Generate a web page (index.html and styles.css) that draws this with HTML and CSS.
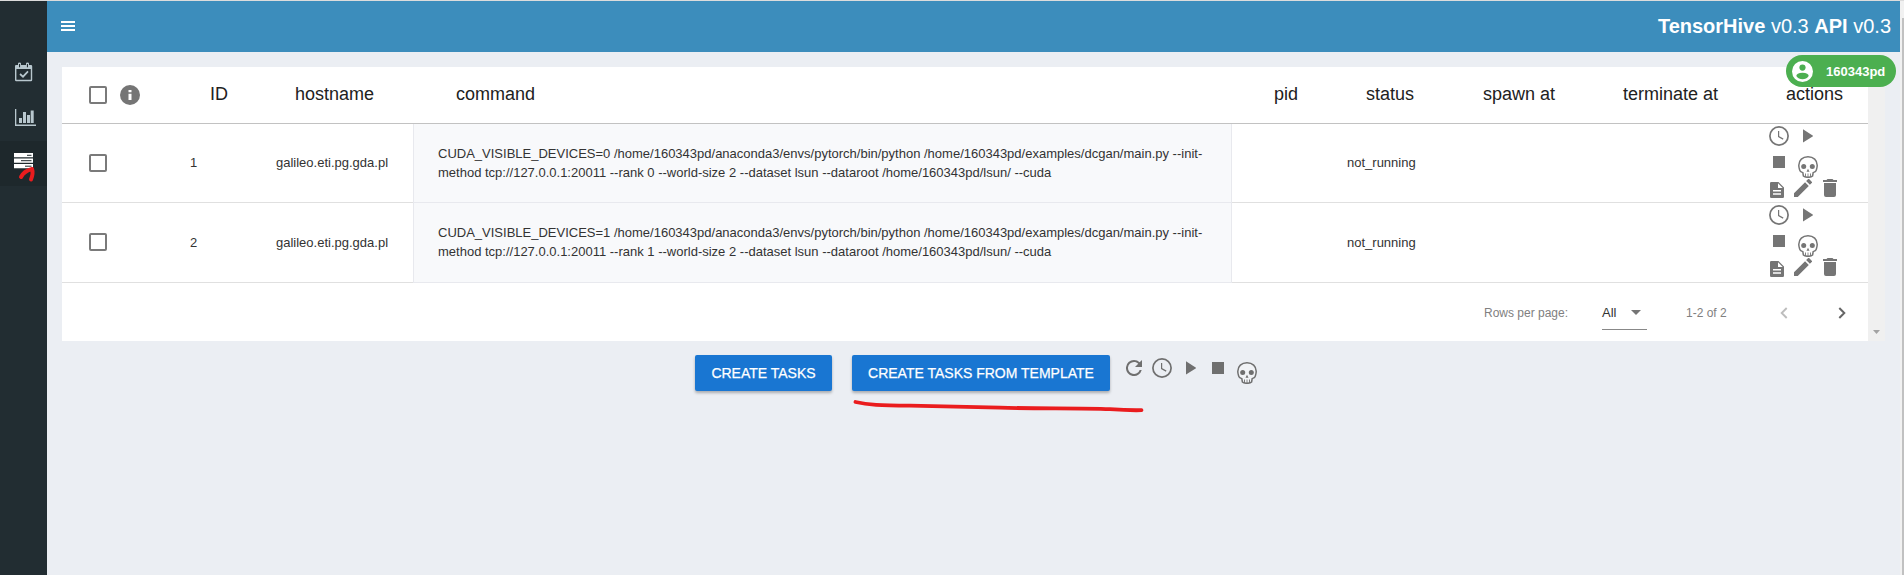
FILE: index.html
```html
<!DOCTYPE html>
<html lang="en">
<head>
<meta charset="utf-8">
<title>TensorHive</title>
<link rel="stylesheet" href="styles.css">
</head>
<body>
<svg class="defs" width="0" height="0">
  <symbol id="clock" viewBox="0 0 20 20"><circle cx="10" cy="10" r="9.1" fill="none" stroke="currentColor" stroke-width="1.7"/><path d="M9.6 5v5.6l4.6 2.5" fill="none" stroke="currentColor" stroke-width="1.2"/></symbol>
  <symbol id="play" viewBox="0 0 10 14"><path d="M0 0.3v13.2L10.3 7z" fill="currentColor"/></symbol>
  <symbol id="stop" viewBox="0 0 12 12"><path d="M0 0h12v12H0z" fill="currentColor"/></symbol>
  <symbol id="skull" viewBox="0 0 20 22"><path d="M10 .8C4.500.8.800 4.200.800 9.300c0 3 .700 3.600 1 5 .300 1.600 1.600 1.800 3 2.300l.600 3.400c1.200 1.100 2.700 1.300 4.600 1.300s3.400-.200 4.600-1.300l.600-3.400c1.400-.500 2.700-.700 3-2.300.300-1.400 1-2 1-5C19.200 4.200 15.500.8 10 .8z" fill="#fff" fill-opacity=".3" stroke="currentColor" stroke-width="1.500"/><circle cx="5.700" cy="10.600" r="2.500" fill="currentColor"/><circle cx="14.300" cy="10.600" r="2.500" fill="currentColor"/><path d="M10 12.800l1.500 3H8.500zM7 17.500h.9v3.500H7zM9.600 17.500h.8v3.500h-.8zM12.100 17.500h.9v3.500h-.9z" fill="currentColor"/></symbol>
  <symbol id="doc" viewBox="0 0 14 16"><path fill-rule="evenodd" d="M1.200 0H8.500L14 5.500V14.800Q14 16 12.800 16H1.200Q0 16 0 14.800V1.200Q0 0 1.200 0zM8 1.300V6h4.700zM3 8v1.500h8V8zM3 11.300v1.500h8v-1.500z" fill="currentColor"/></symbol>
  <symbol id="pencil" viewBox="3 3 18 18"><path d="M3 17.250V21h3.750L17.810 9.940l-3.750-3.750L3 17.250zM20.710 7.040a1 1 0 0 0 0-1.410l-2.340-2.340a1 1 0 0 0-1.410 0l-1.830 1.830 3.750 3.750 1.830-1.830z" fill="currentColor"/></symbol>
  <symbol id="trash" viewBox="5 3 14 18"><path d="M6 19a2 2 0 0 0 2 2h8a2 2 0 0 0 2-2V7H6v12zM19 4h-3.500l-1-1h-5l-1 1H5v2h14V4z" fill="currentColor"/></symbol>
  <symbol id="refresh" viewBox="4 4 16 16"><path d="M17.650 6.350A7.960 7.960 0 0 0 12 4a8 8 0 1 0 7.730 10h-2.080A6 6 0 1 1 12 6c1.660 0 3.140.69 4.220 1.780L13 11h7V4l-2.350 2.350z" fill="currentColor"/></symbol>
</svg>
<div class="app">
  <nav class="sidebar">
    <a class="nav-item"><svg width="18" height="20" viewBox="0 0 18 20"><path fill="#b8c7ce" fill-rule="evenodd" d="M1 3h2V1.500Q3 .5 4.500.5T6 1.500V3h5V1.500Q11 .5 12.500.5T14 1.500V3h2q1.200 0 1.200 1.200V18q0 1.200-1.200 1.200H1.200Q0 19.200 0 18V4.200Q0 3 1 3zM1.400 7v10.800h14.400V7zM4 2v3.200h1.100V2zm7.900 0v3.200H13V2z"/><path d="M5 12l3 2.700 5-5.300" fill="none" stroke="#b8c7ce" stroke-width="1.700"/></svg></a>
    <a class="nav-item"><svg width="21" height="17" viewBox="0 0 21 17"><path fill="#b8c7ce" d="M0 0h1.300v15.500H21V17H0zM4 9h3v5H4zM8 3h3v11H8zM12 6h3v8h-3zM15.700 1.500h3V14h-3z"/></svg></a>
    <a class="nav-item active"><svg width="19" height="16" viewBox="0 0 19 16"><path fill="#fff" d="M0 0h19v4.300H0zM0 5.600h19v4.200H0zM0 11h19v4.300H0z"/><path stroke="#1e282c" d="M13 2.300h4.500M7 7.700h10.500M11 13.200h6.500"/></svg></a>
  </nav>
  <div class="main">
    <header class="topbar">
      <svg class="burger" width="14" height="11" viewBox="0 0 14 11"><path d="M0 0h14v2H0zM0 4h14v2H0zM0 8h14v2H0z" fill="#fff"/></svg>
      <div class="brand"><b>TensorHive</b> v0.3 <b>API</b> v0.3</div>
    </header>
    <div class="user-chip"><svg width="21" height="21" viewBox="0 0 21 21"><circle cx="10.500" cy="10.500" r="10.500" fill="#fff"/><circle cx="10.500" cy="6.600" r="3.100" fill="#4caf50"/><path d="M4.300 15q0-3 6.200-3.200 6.200.2 6.200 3.200-2.300 3.200-6.200 3.200T4.300 15z" fill="#4caf50"/></svg><span>160343pd</span></div>
    <section class="card">
      <div class="table-wrap">
        <table>
          <colgroup><col class="c-check"><col class="c-id"><col class="c-host"><col class="c-cmd"><col class="c-pid"><col class="c-status"><col class="c-spawn"><col class="c-term"><col class="c-act"></colgroup>
          <thead><tr>
            <th><div class="check-cell"><span class="checkbox"></span><svg width="20" height="20" viewBox="0 0 20 20"><circle cx="10" cy="10" r="10" fill="#757575"/><path d="M8.500 5h3v2.300h-3zM8.500 8.700h3V15h-3z" fill="#fff"/></svg></div></th>
            <th class="h-id">ID</th><th class="h-host">hostname</th><th class="h-cmd">command</th><th class="h-pid">pid</th><th class="h-status">status</th><th class="h-spawn">spawn at</th><th class="h-term">terminate at</th><th class="h-act">actions</th>
          </tr></thead>
          <tbody>
            <tr>
              <td><div class="check-cell"><span class="checkbox"></span></div></td><td class="id">1</td><td class="host">galileo.eti.pg.gda.pl</td>
              <td class="cmd">CUDA_VISIBLE_DEVICES=0 /home/160343pd/anaconda3/envs/pytorch/bin/python /home/160343pd/examples/dcgan/main.py --init-<br>method tcp://127.0.0.1:20011 --rank 0 --world-size 2 --dataset lsun --dataroot /home/160343pd/lsun/ --cuda</td>
              <td></td><td class="status">not_running</td><td></td><td></td>
              <td class="actions"><div class="action-line first"><svg class="i-clock"><use href="#clock"/></svg><svg class="i-play"><use href="#play"/></svg></div><div class="action-line second"><svg class="i-stop"><use href="#stop"/></svg><svg class="i-skull"><use href="#skull"/></svg></div><div class="action-line third"><svg class="i-doc"><use href="#doc"/></svg><svg class="i-pencil"><use href="#pencil"/></svg><svg class="i-trash"><use href="#trash"/></svg></div></td>
            </tr>
            <tr>
              <td><div class="check-cell"><span class="checkbox"></span></div></td><td class="id">2</td><td class="host">galileo.eti.pg.gda.pl</td>
              <td class="cmd">CUDA_VISIBLE_DEVICES=1 /home/160343pd/anaconda3/envs/pytorch/bin/python /home/160343pd/examples/dcgan/main.py --init-<br>method tcp://127.0.0.1:20011 --rank 1 --world-size 2 --dataset lsun --dataroot /home/160343pd/lsun/ --cuda</td>
              <td></td><td class="status">not_running</td><td></td><td></td>
              <td class="actions"><div class="action-line first"><svg class="i-clock"><use href="#clock"/></svg><svg class="i-play"><use href="#play"/></svg></div><div class="action-line second"><svg class="i-stop"><use href="#stop"/></svg><svg class="i-skull"><use href="#skull"/></svg></div><div class="action-line third"><svg class="i-doc"><use href="#doc"/></svg><svg class="i-pencil"><use href="#pencil"/></svg><svg class="i-trash"><use href="#trash"/></svg></div></td>
            </tr>
          </tbody>
        </table>
        <footer class="pager">
          <span class="rows-label">Rows per page:</span>
          <span class="select">All<svg width="10" height="5" viewBox="0 0 10 5"><path d="M0 0h10L5 5z" fill="#757575"/></svg></span>
          <span class="range">1-2 of 2</span>
          <svg class="prev" width="8" height="12" viewBox="0 0 8 12"><path d="M6.700 1L1.700 6l5 5" fill="none" stroke="#bdbdbd" stroke-width="1.900"/></svg>
          <svg class="next" width="8" height="12" viewBox="0 0 8 12"><path d="M1.300 1l5 5-5 5" fill="none" stroke="#666" stroke-width="2"/></svg>
        </footer>
      </div>
      <div class="inner-scroll"><svg width="7" height="4" viewBox="0 0 7 4"><path d="M0 0h7L3.500 4z" fill="#a3a3a3"/></svg></div>
    </section>
    <div class="toolbar">
      <button class="btn">CREATE TASKS</button>
      <button class="btn">CREATE TASKS FROM TEMPLATE</button>
      <div class="tools"><svg class="i-refresh"><use href="#refresh"/></svg><svg class="i-clock"><use href="#clock"/></svg><svg class="i-play"><use href="#play"/></svg><svg class="i-stop"><use href="#stop"/></svg><svg class="i-skull"><use href="#skull"/></svg></div>
    </div>
  </div>
  <div class="page-scroll"><div class="thumb"></div></div>
</div>
<svg class="marks" width="1904" height="575" viewBox="0 0 1904 575"><g fill="none" stroke="#ea1c1e" stroke-linecap="round" stroke-linejoin="round"><path d="M855.500 402C868 405 880 405.500 910 405.700L1000 407.600C1040 409 1080 407.500 1110 409.200Q1128 410.500 1141.500 410.200" stroke-width="3.800"/><path d="M21 177Q24 171 32 169Q33.500 173 31 179.500" stroke-width="4"/></g></svg>
</body>
</html>
```
FILE: styles.css
```css
* { box-sizing: border-box; }
body { margin: 0; width: 1904px; height: 575px; overflow: hidden; font-family: "Liberation Sans", Arial, sans-serif; font-size: 13px; color: #333; background: #ecf0f5; }
svg { display: block; flex: none; }
.defs { position: absolute; }
.app { display: flex; height: 575px; border-top: 1px solid #dcdcdc; }
.sidebar { width: 47px; background: #222d32; padding-top: 49px; flex: none; }
.nav-item { display: flex; align-items: center; height: 44px; margin-bottom: 1px; padding-left: 15px; }
.nav-item.active { background: #1e282c; height: 45px; margin-top: 2px; padding-left: 14px; padding-bottom: 6px; }
.main { width: 1853px; position: relative; flex: none; background: #ebeef3; }
.topbar { height: 51px; background: #3c8dbc; display: flex; align-items: center; justify-content: space-between; padding: 0 9px 0 14px; color: #fff; }
.brand { font-size: 20px; }
.user-chip { position: absolute; right: 4px; top: 54px; width: 110px; height: 32px; border-radius: 16px; background: #4caf50; color: #fff; font-weight: bold; font-size: 13px; display: flex; align-items: center; gap: 13px; padding-left: 6px; }
.card { display: flex; margin: 15px 0 0 15px; width: 1823px; height: 274px; }
.table-wrap { width: 1806px; background: #fff; }
.inner-scroll { width: 17px; background: #f0f0f0; display: flex; align-items: flex-end; justify-content: center; padding-bottom: 7px; }
table { width: 1806px; table-layout: fixed; border-collapse: separate; border-spacing: 0; }
.c-check { width: 118px; } .c-id { width: 86px; } .c-host { width: 147px; } .c-cmd { width: 819px; } .c-pid { width: 95px; } .c-status { width: 133px; } .c-spawn { width: 140px; } .c-term { width: 150px; } .c-act { width: 118px; }
th, td { padding: 0; text-align: left; white-space: nowrap; border-bottom: 1px solid #e0e0e0; }
th { height: 57px; font-size: 18px; font-weight: normal; color: #212121; border-bottom-color: #c2c2c2; padding-bottom: 2px; }
td { height: 79px; padding-bottom: 1px; }
tr:last-child td { height: 80px; }
.check-cell { display: flex; align-items: center; gap: 13px; padding-left: 27px; }
th .check-cell { padding-top: 2px; }
.checkbox { width: 18px; height: 18px; border: 2px solid #7a7a7a; border-radius: 2px; }
.h-id { padding-left: 30px; } .h-host { padding-left: 29px; } .h-cmd { padding-left: 43px; } .h-pid { padding-left: 42px; } .h-status { padding-left: 39px; } .h-spawn { padding-left: 23px; } .h-term { padding-left: 23px; } .h-act { padding-left: 36px; }
.id { padding-left: 10px; } .host { padding-left: 10px; } .status { padding-left: 20px; }
.cmd { background: #f8f9fb; border: 1px solid #e8e9ee; border-top-width: 0; padding-left: 24px; line-height: 19px; }
.actions { vertical-align: top; color: #757575; padding-bottom: 0; }
.action-line { display: flex; padding-left: 19px; }
.first { height: 32px; padding-top: 2px; }
.first .i-play { margin: 3px 0 0 14px; }
.second { height: 23px; padding-left: 23px; }
.second .i-skull { margin-left: 13px; }
.third { padding-left: 20px; }
.third .i-doc { margin: 3px 10px 0 0; }
.third .i-trash { margin-left: 11px; }
.i-clock { width: 20px; height: 20px; } .i-play { width: 10px; height: 14px; } .i-stop { width: 12px; height: 12px; } .i-skull { width: 20px; height: 22px; } .i-doc { width: 14px; height: 16px; } .i-pencil { width: 18px; height: 18px; } .i-trash { width: 14px; height: 18px; } .i-refresh { width: 16px; height: 16px; }
.pager { display: flex; align-items: center; height: 60px; padding-left: 1422px; font-size: 12px; color: #808080; white-space: nowrap; }
.rows-label { width: 118px; }
.select { display: flex; align-items: center; gap: 15px; width: 45px; height: 34px; border-bottom: 1px solid #888; font-size: 13px; color: #333; }
.range { width: 94px; margin-left: 39px; }
.next { margin-left: 50px; }
.toolbar { display: flex; padding: 14px 0 0 648px; }
.btn { height: 36px; border: 0; border-radius: 2px; margin-right: 20px; padding: 0; width: 137px; background: #1976d2; color: #fff; font: 14px "Liberation Sans", Arial, sans-serif; box-shadow: 0 2px 3px rgba(0,0,0,.28); white-space: nowrap; -webkit-text-stroke: .25px #fff; }
.btn + .btn { width: 258px; margin-right: 16px; }
.tools { display: flex; color: #6f6f6f; padding-top: 3px; }
.tools .i-refresh { margin: 2px 10px 0 0; }
.tools .i-play { margin: 3px 16px 0 14px; }
.tools .i-stop { margin: 4px 13px 0 0; }
.tools .i-skull { margin-top: 4px; }
.page-scroll { width: 4px; background: #f1f1f1; padding: 17px 0 0 2px; }
.thumb { height: 557px; background: #c1c1c1; }
.marks { position: absolute; left: 0; top: 0; pointer-events: none; }
```
